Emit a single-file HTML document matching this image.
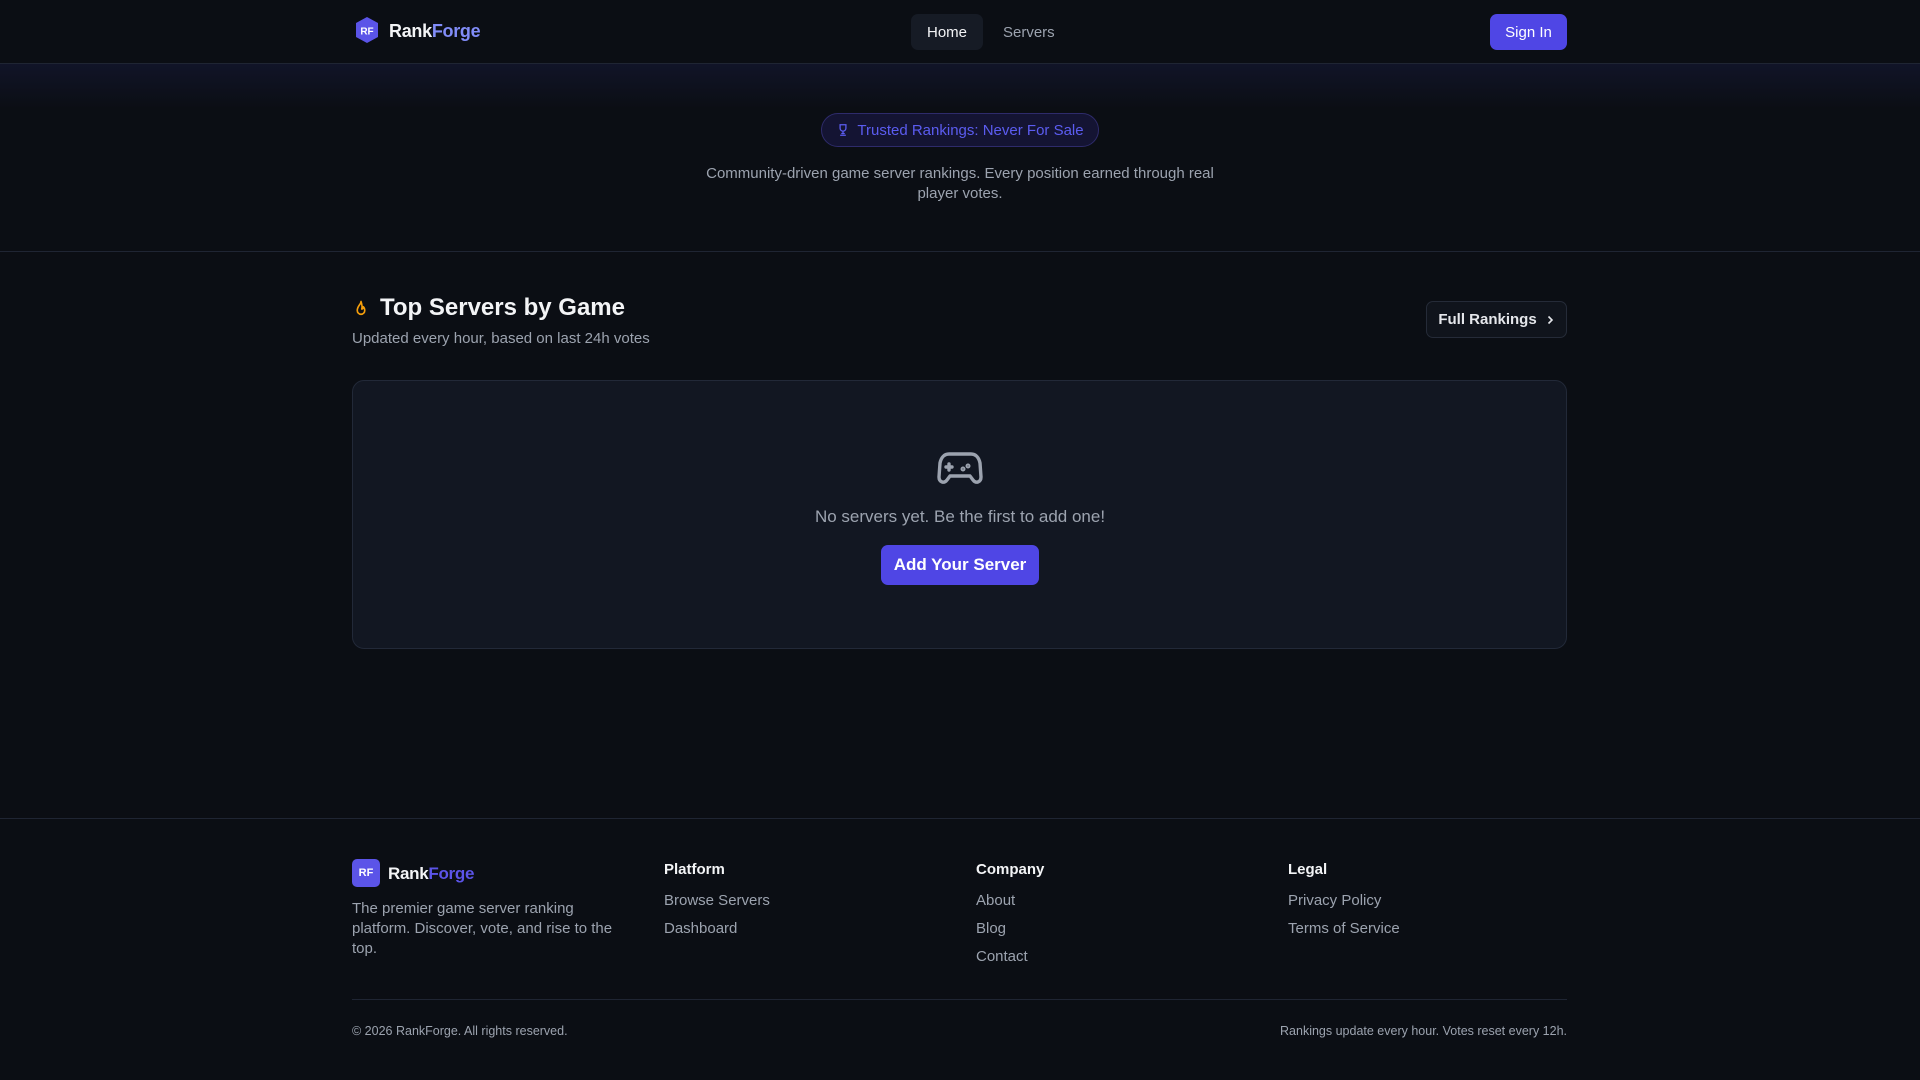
<!DOCTYPE html>
<html><head><meta charset="utf-8"><style>
*{box-sizing:border-box;margin:0;padding:0}
body{width:1920px;height:1080px;background:#0b0e14;font-family:"Liberation Sans",sans-serif;color:#e5e7eb;position:relative;overflow:hidden}
.abs{position:absolute}
.nav{left:0;top:0;width:1920px;height:64px;border-bottom:1px solid #1f2533;background:#0b0e14}
.hero{left:0;top:64px;width:1920px;height:188px;border-bottom:1px solid #1f2533;background:linear-gradient(#111428 0,#0b0e14 45px)}
.btn{background:#4f46e5;color:#fff;border-radius:7px;font-weight:bold;display:flex;align-items:center;justify-content:center}
.fh{font-size:15px;font-weight:bold;color:#f3f4f6}
.fl{font-size:15px;color:#9ca3af;line-height:28px}
</style></head><body>
<div class="abs nav"></div>
<svg class="abs" style="left:354px;top:17px" width="26" height="26" viewBox="0 0 26 26"><polygon points="13,0 24,6 24,20 13,26 2,20 2,6" fill="#5b54e8"/><text x="13" y="17.5" fill="#fff" font-size="10" font-weight="bold" text-anchor="middle" font-family="Liberation Sans">RF</text></svg>
<div class="abs" style="left:389px;top:21px;font-size:18px;font-weight:bold;color:#f3f4f6;letter-spacing:-0.3px">Rank<span style="color:#818cf8">Forge</span></div>
<div class="abs" style="left:911px;top:14px;width:72px;height:36px;background:#161b25;border-radius:7px;color:#f3f4f6;font-size:15px;display:flex;align-items:center;justify-content:center">Home</div>
<div class="abs" style="left:1003px;top:24px;font-size:15px;color:#9ca3af">Servers</div>
<div class="abs btn" style="left:1490px;top:14px;width:77px;height:36px;font-size:15px;font-weight:normal">Sign In</div>

<div class="abs hero"></div>
<div class="abs" style="left:821px;top:113px;width:278px;height:34px;border:1px solid #2e2b6b;background:#141433;border-radius:17px;display:flex;align-items:center;justify-content:center;gap:7px;color:#5b5cf0;font-size:15px">
<svg width="14" height="14" viewBox="0 0 24 24" fill="none" stroke="#5b5cf0" stroke-width="2.2" stroke-linecap="round"><path d="M7 3h10v6a5 5 0 0 1-10 0z"/><path d="M12 14v4M8 21h8M10 18h4"/></svg>Trusted Rankings: Never For Sale</div>
<div class="abs" style="left:700px;top:164px;width:520px;text-align:center;font-size:15px;line-height:20px;color:#9ca3af">Community-driven game server rankings. Every position earned through real player votes.</div>

<svg class="abs" style="left:352px;top:299px" width="18" height="20" viewBox="0 0 24 24" fill="none" stroke="#f59e0b" stroke-width="2.2" stroke-linecap="round" stroke-linejoin="round"><path d="M12 2c0 4-5 6-5 12a5 5 0 0 0 10 0c0-2-1-4-2-5 0 2-1 3-2 3 1-3 0-7-1-10z"/></svg>
<div class="abs" style="left:380px;top:294px;font-size:24px;font-weight:bold;color:#f3f4f6">Top Servers by Game</div>
<div class="abs" style="left:352px;top:330px;font-size:15px;color:#9ca3af">Updated every hour, based on last 24h votes</div>
<div class="abs" style="left:1426px;top:301px;width:141px;height:37px;border:1px solid #252b38;background:#10141c;border-radius:7px;display:flex;align-items:center;justify-content:center;gap:8px;font-size:15px;font-weight:bold;color:#e5e7eb">Full Rankings<svg width="10" height="10" viewBox="0 0 10 10" fill="none" stroke="#e5e7eb" stroke-width="1.6"><path d="M3.5 1.5 7 5 3.5 8.5"/></svg></div>

<div class="abs" style="left:352px;top:380px;width:1215px;height:269px;background:#121722;border:1px solid #222938;border-radius:12px"></div>
<svg class="abs" style="left:937px;top:451px" width="46" height="36" viewBox="0 0 46 36" fill="none" stroke="#9ca3af" stroke-width="3.4" stroke-linecap="round" stroke-linejoin="round"><path d="M12 3h22c5 0 8 4 9 9l1 14c0 5-5 7-8 3l-3-4H13l-3 4c-3 4-8 2-8-3l1-14C4 7 7 3 12 3z"/><path d="M12 13v6M9 16h6"/><circle cx="31" cy="15" r="0.8" fill="#9ca3af"/><circle cx="26" cy="18" r="0.8" fill="#9ca3af"/></svg>
<div class="abs" style="left:660px;top:507px;width:600px;text-align:center;font-size:17px;color:#9ca3af">No servers yet. Be the first to add one!</div>
<div class="abs btn" style="left:881px;top:545px;width:158px;height:40px;font-size:17px">Add Your Server</div>

<div class="abs" style="left:0;top:818px;width:1920px;border-top:1px solid #1f2533"></div>
<div class="abs" style="left:352px;top:859px;width:28px;height:28px;background:#5b54e8;border-radius:5px;color:#fff;font-size:11px;font-weight:bold;display:flex;align-items:center;justify-content:center">RF</div>
<div class="abs" style="left:388px;top:864px;font-size:17px;font-weight:bold;color:#f3f4f6;letter-spacing:-0.3px">Rank<span style="color:#5b54e8">Forge</span></div>
<div class="abs" style="left:352px;top:899px;width:280px;font-size:15px;line-height:20px;color:#9ca3af">The premier game server ranking platform. Discover, vote, and rise to the top.</div>
<div class="abs fh" style="left:664px;top:861px">Platform</div>
<div class="abs fl" style="left:664px;top:887px">Browse Servers<br>Dashboard</div>
<div class="abs fh" style="left:976px;top:861px">Company</div>
<div class="abs fl" style="left:976px;top:887px">About<br>Blog<br>Contact</div>
<div class="abs fh" style="left:1288px;top:861px">Legal</div>
<div class="abs fl" style="left:1288px;top:887px">Privacy Policy<br>Terms of Service</div>
<div class="abs" style="left:352px;top:999px;width:1215px;border-top:1px solid #1f2533"></div>
<div class="abs" style="left:352px;top:1024px;font-size:12.5px;color:#9ca3af">© 2026 RankForge. All rights reserved.</div>
<div class="abs" style="right:353px;top:1024px;font-size:12.5px;color:#9ca3af">Rankings update every hour. Votes reset every 12h.</div>
</body></html>
